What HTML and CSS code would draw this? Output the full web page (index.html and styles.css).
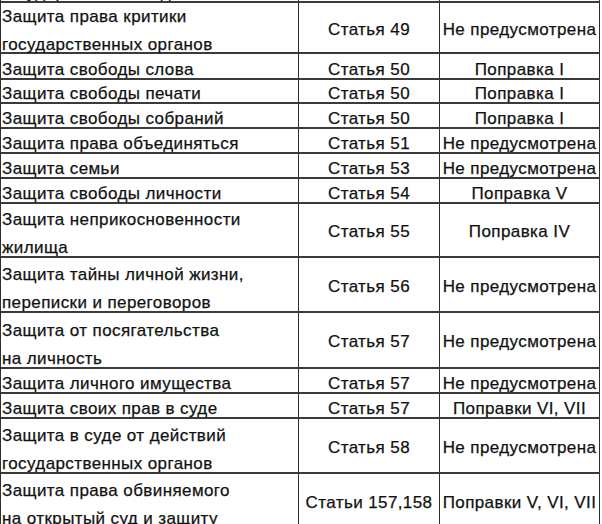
FILE: index.html
```html
<!DOCTYPE html>
<html lang="ru">
<head>
<meta charset="utf-8">
<title>Таблица</title>
<link rel="stylesheet" href="styles.css">
</head>
<body>
<div class="table">
  <div class="row h30">
    <div class="cell c1"><span class="t">государственными делами</span></div>
    <div class="cell c2"></div>
    <div class="cell c3"></div>
  </div>
  <div class="row double h51">
    <div class="cell c1"><span class="t">Защита права критики<br>государственных органов</span></div>
    <div class="cell c2"><span class="t">Статья 49</span></div>
    <div class="cell c3"><span class="t">Не предусмотрена</span></div>
  </div>
  <div class="row h26">
    <div class="cell c1"><span class="t">Защита свободы слова</span></div>
    <div class="cell c2"><span class="t">Статья 50</span></div>
    <div class="cell c3"><span class="t">Поправка I</span></div>
  </div>
  <div class="row h24">
    <div class="cell c1"><span class="t">Защита свободы печати</span></div>
    <div class="cell c2"><span class="t">Статья 50</span></div>
    <div class="cell c3"><span class="t">Поправка I</span></div>
  </div>
  <div class="row h25">
    <div class="cell c1"><span class="t">Защита свободы собраний</span></div>
    <div class="cell c2"><span class="t">Статья 50</span></div>
    <div class="cell c3"><span class="t">Поправка I</span></div>
  </div>
  <div class="row h25">
    <div class="cell c1"><span class="t">Защита права объединяться</span></div>
    <div class="cell c2"><span class="t">Статья 51</span></div>
    <div class="cell c3"><span class="t">Не предусмотрена</span></div>
  </div>
  <div class="row h25">
    <div class="cell c1"><span class="t">Защита семьи</span></div>
    <div class="cell c2"><span class="t">Статья 53</span></div>
    <div class="cell c3"><span class="t">Не предусмотрена</span></div>
  </div>
  <div class="row h25">
    <div class="cell c1"><span class="t">Защита свободы личности</span></div>
    <div class="cell c2"><span class="t">Статья 54</span></div>
    <div class="cell c3"><span class="t">Поправка V</span></div>
  </div>
  <div class="row double h54">
    <div class="cell c1"><span class="t">Защита неприкосновенности<br>жилища</span></div>
    <div class="cell c2"><span class="t">Статья 55</span></div>
    <div class="cell c3"><span class="t">Поправка IV</span></div>
  </div>
  <div class="row double h55">
    <div class="cell c1"><span class="t">Защита тайны личной жизни,<br>переписки и переговоров</span></div>
    <div class="cell c2"><span class="t">Статья 56</span></div>
    <div class="cell c3"><span class="t">Не предусмотрена</span></div>
  </div>
  <div class="row double h56">
    <div class="cell c1"><span class="t">Защита от посягательства<br>на личность</span></div>
    <div class="cell c2"><span class="t">Статья 57</span></div>
    <div class="cell c3"><span class="t">Не предусмотрена</span></div>
  </div>
  <div class="row h25">
    <div class="cell c1"><span class="t">Защита личного имущества</span></div>
    <div class="cell c2"><span class="t">Статья 57</span></div>
    <div class="cell c3"><span class="t">Не предусмотрена</span></div>
  </div>
  <div class="row h25">
    <div class="cell c1"><span class="t">Защита своих прав в суде</span></div>
    <div class="cell c2"><span class="t">Статья 57</span></div>
    <div class="cell c3"><span class="t">Поправки VI, VII</span></div>
  </div>
  <div class="row double h55">
    <div class="cell c1"><span class="t">Защита в суде от действий<br>государственных органов</span></div>
    <div class="cell c2"><span class="t">Статья 58</span></div>
    <div class="cell c3"><span class="t">Не предусмотрена</span></div>
  </div>
  <div class="row double h55">
    <div class="cell c1"><span class="t">Защита права обвиняемого<br>на открытый суд и защиту</span></div>
    <div class="cell c2"><span class="t">Статьи 157,158</span></div>
    <div class="cell c3"><span class="t">Поправки V, VI, VII</span></div>
  </div>
</div>
</body>
</html>
```

FILE: styles.css
```css
html, body {
  margin: 0;
  padding: 0;
  background: #ffffff;
}

.table {
  width: 600px;
  margin-top: -27px;
  border-left: 1px solid #2e2e2e;
  box-sizing: border-box;
  font-family: "Liberation Sans", Arial, sans-serif;
  font-size: 17px;
  letter-spacing: 0.4px;
  color: #111111;
  -webkit-text-stroke: 0.25px #111111;
  overflow: hidden;
  height: 560px;
}

.row {
  display: grid;
  grid-template-columns: 298px 141px 160px;
  box-sizing: border-box;
  border-bottom: 2px solid #3a3a3a;
}

.h24 { height: 24px; }
.h25 { height: 25px; }
.h26 { height: 26px; }
.h30 { height: 30px; }
.h51 { height: 51px; }
.h54 { height: 54px; }
.h55 { height: 55px; }
.h56 { height: 56px; }

.cell {
  display: flex;
  align-items: flex-end;
  border-right: 1px solid #2e2e2e;
  white-space: nowrap;
}

.t {
  line-height: 28px;
  margin-bottom: -6px;
}

.c1 {
  padding-left: 1px;
}

.c2,
.c3 {
  justify-content: center;
  text-align: center;
}

.double .c2,
.double .c3 {
  align-items: center;
}

.double .c2 .t,
.double .c3 .t {
  margin-bottom: 0;
}

.double .c2 .t {
  padding-top: 4px;
}

.double .c3 .t {
  padding-top: 4px;
}
```
